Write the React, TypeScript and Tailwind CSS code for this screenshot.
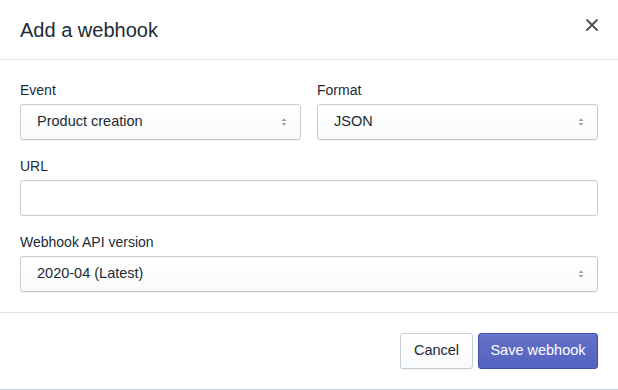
import React from "react";

function Chevrons() {
  return (
    <svg width="8" height="12" viewBox="0 0 8 12" className="shrink-0">
      <path d="M4 2.5 L6.5 5 H1.5 Z" fill="#919eab" />
      <path d="M4 9.5 L6.5 7 H1.5 Z" fill="#919eab" />
    </svg>
  );
}

function Select({ value }: { value: string }) {
  return (
    <div className="flex h-9 items-center justify-between rounded-[3px] border border-[#c4cdd5] bg-gradient-to-b from-white to-[#f9fafb] pl-4 pr-3 shadow-[0_1px_0_rgba(22,29,37,0.05)]">
      <span className="text-[14.5px] text-[#212b36]">{value}</span>
      <Chevrons />
    </div>
  );
}

function Field({ label, children }: { label: string; children: React.ReactNode }) {
  return (
    <div className="flex flex-col">
      <label className="mb-1 text-sm leading-5 text-[#212b36]">{label}</label>
      {children}
    </div>
  );
}

export default function App() {
  return (
    <div className="h-[390px] w-[618px] bg-white font-['Liberation_Sans',Arial,sans-serif] text-[#212b36]">
      <div className="flex h-[60px] items-start justify-between border-b border-[#dfe3e8] pl-5 pr-2.5">
        <h2 className="mt-[18px] text-[20px] font-normal leading-6">Add a webhook</h2>
        <button className="mt-[9px] flex h-8 w-8 items-center justify-center">
          <svg width="14" height="14" viewBox="0 0 14 14">
            <path d="M2 2 L12 12 M12 2 L2 12" stroke="#454f5b" strokeWidth="1.8" strokeLinecap="round" />
          </svg>
        </button>
      </div>

      <div className="flex flex-col gap-4 border-b border-[#dfe3e8] p-5">
        <div className="grid grid-cols-2 gap-4">
          <Field label="Event">
            <Select value="Product creation" />
          </Field>
          <Field label="Format">
            <Select value="JSON" />
          </Field>
        </div>
        <Field label="URL">
          <input className="h-9 rounded-[3px] border border-[#c4cdd5] bg-white px-3 text-[14.5px] shadow-[inset_0_1px_0_rgba(99,115,129,0.05)] outline-none" />
        </Field>
        <Field label="Webhook API version">
          <Select value="2020-04 (Latest)" />
        </Field>
      </div>

      <div className="flex h-[77px] items-center justify-end gap-[5px] border-b border-[#c4cdd5] px-5">
        <button className="h-9 w-[73px] rounded-[3px] border border-[#c4cdd5] bg-gradient-to-b from-white to-[#f9fafb] text-[14.5px] text-[#212b36] shadow-[0_1px_0_rgba(22,29,37,0.05)]">
          Cancel
        </button>
        <button className="h-9 w-[120px] rounded-[3px] border border-[#3f4eae] bg-gradient-to-b from-[#6371c7] to-[#5563c1] text-[14.5px] text-white shadow-[inset_0_1px_0_0_#6f7bcb]">
          Save webhook
        </button>
      </div>
    </div>
  );
}
